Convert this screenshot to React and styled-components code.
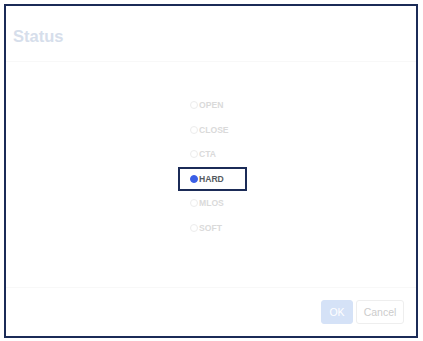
import React, { useState } from 'react';
import styled, { createGlobalStyle } from 'styled-components';

const GlobalStyle = createGlobalStyle`
  html, body {
    margin: 0;
    padding: 0;
    background: #ffffff;
    font-family: "Liberation Sans", Arial, sans-serif;
  }
`;

const Page = styled.div`
  padding: 4px;
`;

const Dialog = styled.div`
  box-sizing: border-box;
  width: 414px;
  height: 334px;
  border: 2px solid #1b2b57;
  display: flex;
  flex-direction: column;
  background: #fff;
`;

const Header = styled.div`
  box-sizing: border-box;
  height: 56px;
  display: flex;
  align-items: center;
  padding: 5px 7px 0;
  border-bottom: 1px solid #f8f8f8;
`;

const Title = styled.h2`
  margin: 0;
  font-size: 16.5px;
  font-weight: 700;
  color: #d6deeb;
`;

const Body = styled.div`
  flex: 1;
  display: flex;
  flex-direction: column;
  align-items: center;
  padding-top: 31px;
`;

const Item = styled.label`
  box-sizing: border-box;
  width: 69px;
  height: 24.5px;
  display: flex;
  align-items: center;
  gap: 1px;
  padding-left: 10px;
  margin-left: 3px;
  border: 2px solid ${p => (p.$focused ? '#1b2b57' : 'transparent')};
  font-size: 8.6px;
  font-weight: 700;
  color: ${p => (p.$checked ? '#555a60' : '#dadada')};
  cursor: pointer;
`;

const Dot = styled.span`
  box-sizing: border-box;
  width: 8px;
  height: 8px;
  border-radius: 50%;
  border: 1px solid ${p => (p.$checked ? '#3b5fe6' : '#ececec')};
  background: ${p => (p.$checked ? '#3b5fe6' : '#fff')};
`;

const Footer = styled.div`
  border-top: 1px solid #f8f8f8;
  display: flex;
  justify-content: flex-end;
  align-items: flex-start;
  gap: 3px;
  padding: 12px 12px 0 0;
  flex: 0 0 49px;
  box-sizing: border-box;
`;

const Btn = styled.button`
  width: ${p => p.$w}px;
  height: 24px;
  padding: 0;
  border-radius: 3px;
  font-family: "Liberation Sans", Arial, sans-serif;
  font-size: 10.5px;
  border: 1px solid ${p => (p.$primary ? '#d5e2f7' : '#eeeeee')};
  background: ${p => (p.$primary ? '#d5e2f7' : '#fff')};
  color: ${p => (p.$primary ? '#ffffff' : '#cccccc')};
`;

const options = ['OPEN', 'CLOSE', 'CTA', 'HARD', 'MLOS', 'SOFT'];

export default function App() {
  const [value, setValue] = useState('HARD');
  return (
    <Page>
      <GlobalStyle />
      <Dialog>
        <Header>
          <Title>Status</Title>
        </Header>
        <Body>
          {options.map(o => (
            <Item
              key={o}
              $checked={value === o}
              $focused={value === o}
              onClick={() => setValue(o)}
            >
              <Dot $checked={value === o} />
              {o}
            </Item>
          ))}
        </Body>
        <Footer>
          <Btn $primary $w={32}>OK</Btn>
          <Btn $w={48}>Cancel</Btn>
        </Footer>
      </Dialog>
    </Page>
  );
}
